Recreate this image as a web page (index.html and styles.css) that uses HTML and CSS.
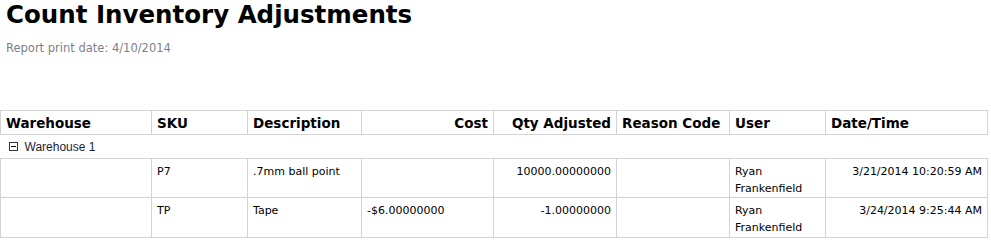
FILE: index.html
```html
<!DOCTYPE html>
<html>
<head>
<meta charset="utf-8">
<link rel="stylesheet" href="styles.css">
</head>
<body>
<div class="report">
  <h1 class="title">Count Inventory Adjustments</h1>
  <div class="subtitle">Report print date: 4/10/2014</div>
  <table class="grid">
    <colgroup>
      <col class="c1"><col class="c2"><col class="c3"><col class="c4"><col class="c5"><col class="c6"><col class="c7"><col class="c8">
    </colgroup>
    <thead>
      <tr>
        <th>Warehouse</th>
        <th>SKU</th>
        <th>Description</th>
        <th class="num">Cost</th>
        <th class="num">Qty Adjusted</th>
        <th>Reason Code</th>
        <th>User</th>
        <th>Date/Time</th>
      </tr>
    </thead>
    <tbody>
      <tr class="group">
        <td colspan="8"><span class="group-label"><span class="toggle"></span>Warehouse 1</span></td>
      </tr>
      <tr class="row">
        <td></td>
        <td>P7</td>
        <td>.7mm ball point</td>
        <td class="num"></td>
        <td class="num">10000.00000000</td>
        <td></td>
        <td>Ryan<br>Frankenfield</td>
        <td class="num">3/21/2014 10:20:59 AM</td>
      </tr>
      <tr class="row last">
        <td></td>
        <td>TP</td>
        <td>Tape</td>
        <td>-$6.00000000</td>
        <td class="num">-1.00000000</td>
        <td></td>
        <td>Ryan<br>Frankenfield</td>
        <td class="num">3/24/2014 9:25:44 AM</td>
      </tr>
    </tbody>
  </table>
</div>
</body>
</html>
```

FILE: styles.css
```css
html, body {
  margin: 0;
  padding: 0;
  background: #ffffff;
}
.report {
  font-family: "DejaVu Sans", Verdana, sans-serif;
  color: #000;
}
.title {
  margin: 0;
  padding: 0 0 0 6px;
  font-size: 24.5px;
  font-weight: bold;
  line-height: 30px;
}
.subtitle {
  padding: 11px 0 0 6px;
  font-size: 11.5px;
  line-height: 14px;
  color: #7d7f8e;
  height: 69px;
}
.grid {
  border-collapse: collapse;
  table-layout: fixed;
  width: 987px;
}
.c1 { width: 151px; }
.c2 { width: 96px; }
.c3 { width: 114px; }
.c4 { width: 132px; }
.c5 { width: 123px; }
.c6 { width: 113px; }
.c7 { width: 96px; }
.c8 { width: 162px; }
.grid th {
  border: 1px solid #d3d3d3;
  font-size: 13.5px;
  font-weight: bold;
  text-align: left;
  padding: 0 5px;
  height: 23px;
  line-height: 16px;
  vertical-align: middle;
}
.grid .num {
  text-align: right;
}
.group td {
  height: 23px;
  padding: 0 0 0 8px;
  vertical-align: middle;
  font-family: "Liberation Sans", Arial, sans-serif;
  font-size: 12px;
  color: #1c1c3c;
}
.group-label {
  display: flex;
  align-items: center;
  gap: 7px;
}
.toggle {
  position: relative;
  width: 7px;
  height: 7px;
  border: 1px solid #333333;
  background: #fff;
}
.toggle::after {
  content: "";
  position: absolute;
  left: 1px;
  right: 1px;
  top: 3px;
  height: 1px;
  background: #111111;
}
.row td {
  border: 1px solid #d3d3d3;
  font-size: 11px;
  line-height: 17px;
  padding: 4px 5px 0 5px;
  height: 34px;
  vertical-align: top;
  color: #000;
}
.row.last td {
  height: 35px;
}
```
